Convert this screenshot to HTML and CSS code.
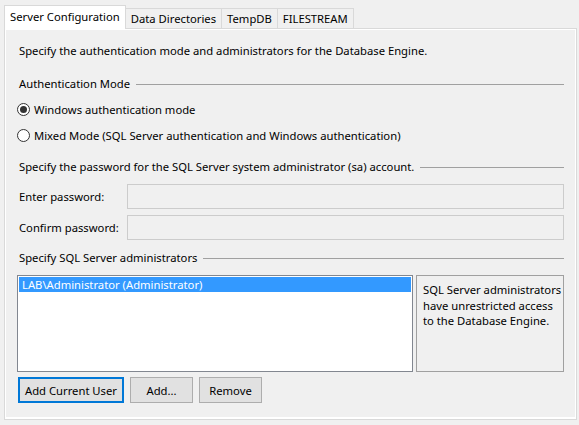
FILE: index.html
```html
<!DOCTYPE html>
<html lang="en">
<head>
    <meta charset="UTF-8">
    <meta name="viewport" content="width=device-width, initial-scale=1.0">
    <title>Server Configuration</title>
    <link rel="stylesheet" href="styles.css">
</head>
<body>
<div class="tabs">
    <div class="tab active">Server Configuration</div>
    <div class="tab">Data Directories</div>
    <div class="tab">TempDB</div>
    <div class="tab">FILESTREAM</div>
</div>

<div class="page">
    <div class="inner">
        <p class="intro">Specify the authentication mode and administrators for the Database Engine.</p>

        <div class="legend legend-auth">Authentication Mode</div>

        <label class="radio-row first">
            <span class="radio checked"></span>
            <span>Windows authentication mode</span>
        </label>
        <label class="radio-row">
            <span class="radio"></span>
            <span>Mixed Mode (SQL Server authentication and Windows authentication)</span>
        </label>

        <div class="legend legend-pwd">Specify the password for the SQL Server system administrator (sa) account.</div>

        <div class="field first">
            <span class="field-label">Enter password:</span>
            <div class="textbox"></div>
        </div>
        <div class="field">
            <span class="field-label">Confirm password:</span>
            <div class="textbox"></div>
        </div>

        <div class="legend legend-admins">Specify SQL Server administrators</div>

        <div class="admins">
            <div class="listbox">
                <div class="list-item selected">LAB\Administrator (Administrator)</div>
            </div>
            <div class="info">SQL Server administrators have unrestricted access to the Database Engine.</div>
        </div>

        <div class="buttons">
            <button type="button" class="btn default">Add Current User</button>
            <button type="button" class="btn">Add...</button>
            <button type="button" class="btn">Remove</button>
        </div>
    </div>
</div>
</body>
</html>
```

FILE: styles.css
```css
body {
    margin: 0;
    background: #f0f0f0;
    font-family: "Noto Sans", "Open Sans", sans-serif;
    font-size: 11.25px;
    color: #000;
    width: 579px;
    height: 425px;
    overflow: hidden;
}

/* tab strip */
.tabs {
    display: flex;
    align-items: flex-end;
    height: 23px;
    padding: 6px 0 0 4px;
    margin-bottom: -1px;
    position: relative;
    z-index: 1;
}

.tab {
    height: 19px;
    line-height: 19px;
    padding: 0 5px;
    margin-left: -1px;
    margin-bottom: 1px;
    border: 1px solid #d9d9d9;
    border-bottom: none;
    background: #f0f0f0;
    white-space: nowrap;
}

.tab.active {
    height: 23px;
    line-height: 22px;
    margin: 0;
    padding: 0 5px;
    background: #fff;
}

/* tab page */
.page {
    margin: 0 2px 0 4px;
    height: 387px;
    border: 1px solid #d9d9d9;
    background: #fff;
    padding: 1px 1px 2px 1px;
}

.inner {
    height: 100%;
    background: #f0f0f0;
    padding: 13px 11px 0 11px;
    box-sizing: border-box;
    line-height: 15px;
}

.intro {
    margin: 0 0 0 2px;
}

.legend {
    display: flex;
    align-items: center;
    gap: 6px;
    padding-left: 2px;
}

.legend::after {
    content: "";
    flex: 1;
    border-top: 1px solid #a0a0a0;
    margin-top: 1px;
}

.legend-auth { margin-top: 18px; }
.legend-pwd { margin-top: 16px; }
.legend-admins { margin-top: 10px; }

/* radio buttons */
.radio-row {
    display: flex;
    align-items: center;
    gap: 4px;
    margin-top: 11px;
}

.radio {
    width: 11px;
    height: 11px;
    border: 1px solid #333;
    border-radius: 50%;
    background: #fff;
    display: flex;
    align-items: center;
    justify-content: center;
}

.radio.checked::after {
    content: "";
    width: 7px;
    height: 7px;
    border-radius: 50%;
    background: #333;
}

/* password fields */
.field {
    display: flex;
    align-items: center;
    margin-top: 6px;
}

.field.first { margin-top: 10px; }

.field-label {
    width: 108px;
    padding-left: 2px;
}

.textbox {
    flex: 1;
    height: 23px;
    border: 1px solid #cccccc;
    background: #f0f0f0;
}

/* administrators */
.admins {
    display: flex;
    gap: 3px;
    margin-top: 10px;
    height: 97px;
}

.listbox {
    width: 392px;
    border: 1px solid #828790;
    background: #fff;
    padding: 1px 1px;
}

.list-item {
    height: 15px;
    line-height: 15px;
    padding-left: 3px;
}

.list-item.selected {
    background: #3399ff;
    color: #fff;
}

.info {
    flex: 1;
    border: 1px solid #a0a0a0;
    padding: 6px 0 6px 6px;
    line-height: 15.5px;
}

.buttons {
    display: flex;
    gap: 6px;
    margin-top: 5px;
    padding-left: 1px;
}

.btn {
    height: 26px;
    min-width: 63px;
    padding: 0 6px;
    border: 1px solid #adadad;
    background: #e1e1e1;
    font-family: inherit;
    font-size: 11.25px;
    color: #000;
}

.btn.default {
    padding: 0 5px;
    border: 2px solid #0078d7;
}
```
